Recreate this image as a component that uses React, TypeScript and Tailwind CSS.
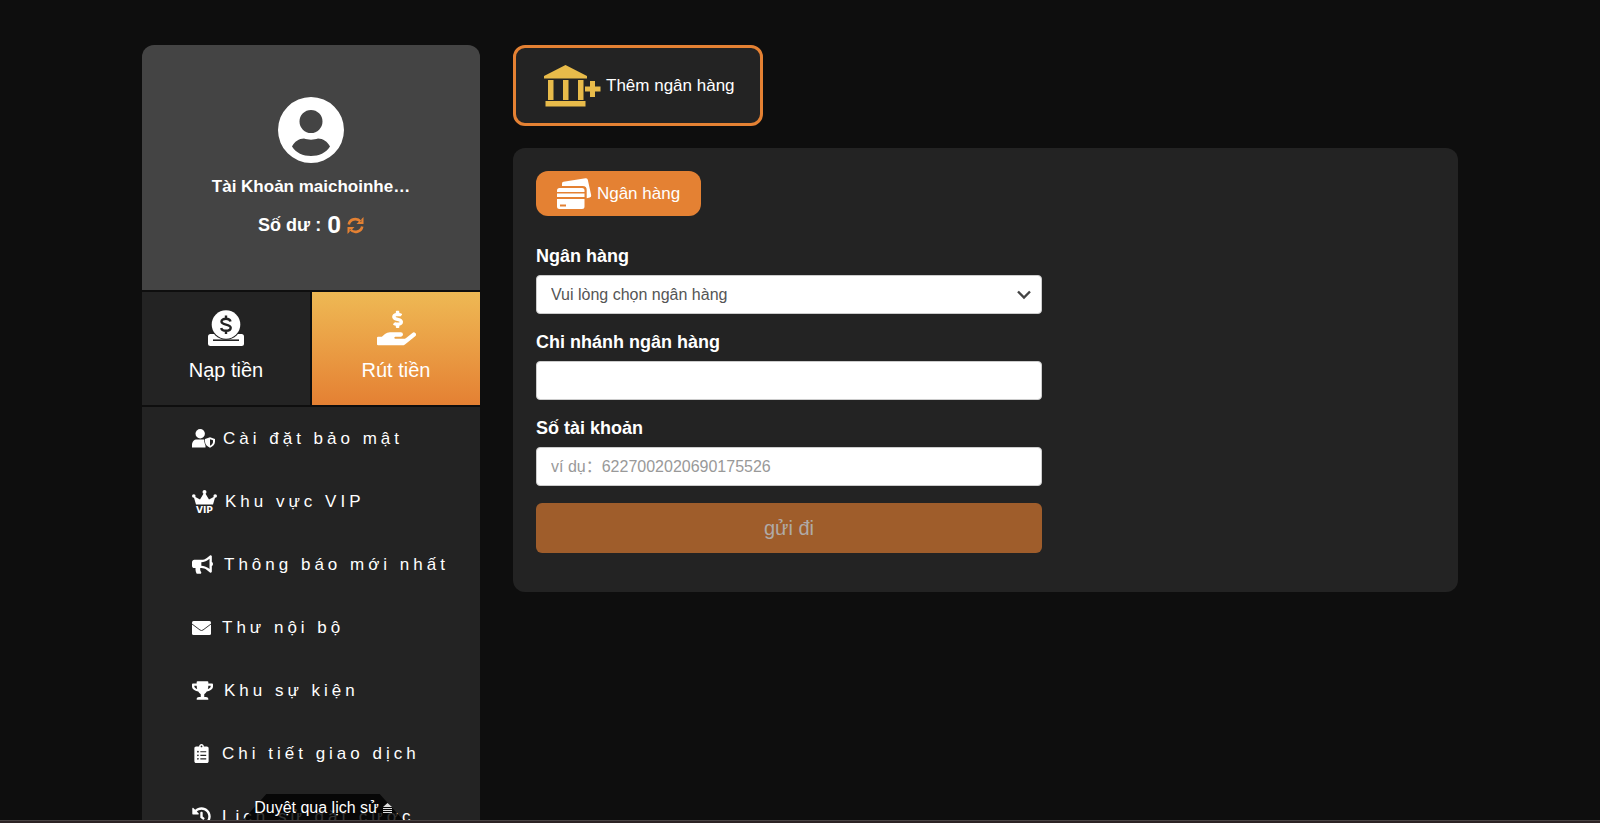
import React from 'react';
import { FaBullhorn, FaClipboardList, FaHandHoldingUsd, FaHistory, FaTrophy } from 'react-icons/fa';

interface MenuItem {
  label: string;
  icon: React.ReactNode;
  gap: string;
}

const AvatarIcon = () => (
  <svg width="66" height="66" viewBox="0 0 66 66" aria-hidden="true">
    <path
      fill="#fff"
      fillRule="evenodd"
      d="M33 0a33 33 0 1 1 0 66a33 33 0 1 1 0-66zM33 13a11.500 11.500 0 1 0 0 23a11.500 11.500 0 1 0 0-23zM14 49.500C16.500 44.500 21 41.500 26 41.500C30 43 36 43 40 41.500C45 41.500 49.500 44.500 52 49.500C48 56 41 59 33 59C25 59 18 56 14 49.500z"
    />
  </svg>
);

const RefreshIcon = () => (
  <svg width="17" height="17" viewBox="0 0 17 17" aria-hidden="true">
    <path
      d="M1.800 7.500A6.600 6.200 0 0 1 13.500 4.500M15.200 9.500A6.600 6.200 0 0 1 3.500 12.500"
      fill="none"
      stroke="#e48133"
      strokeWidth="2.600"
    />
    <path d="M16.500 0v7H9.500l2-2h2.800V2.200zM.5 17v-7h7l-2 2H2.700v2.800z" fill="#e48133" />
  </svg>
);

const DepositIcon = () => (
  <svg width="36" height="36" viewBox="0 0 36 36" aria-hidden="true">
    <rect y="24" width="36" height="12" rx="2.500" fill="#fff" />
    <path d="M5 30.200h26" stroke="#232323" strokeWidth="1.600" />
    <circle cx="18" cy="14.500" r="15.300" fill="#232323" />
    <circle cx="18" cy="14.500" r="14.300" fill="#fff" />
    <path
      d="M18 5.500v3.500M18 20.500v3.500M22.500 11.500c-.5-2-2.200-2.700-4.500-2.700c-2.600 0-4.500 1-4.500 2.800c0 2 2 2.500 4.500 3s4.700 1.200 4.700 3.200c0 2-2 3-4.700 3c-2.500 0-4.400-.8-4.800-2.800"
      fill="none"
      stroke="#232323"
      strokeWidth="2.400"
    />
  </svg>
);

const UserShieldIcon = () => (
  <svg width="23" height="19" viewBox="0 0 23 19" aria-hidden="true">
    <circle cx="8.200" cy="4.800" r="4.700" fill="#fff" />
    <path d="M0 18.500v-2.500c0-3.500 2-5.500 5-5.500h6.500c.8 0 1.500.2 2 .4v7.600z" fill="#fff" />
    <path d="M18 6.500l5.500 2.200v3.500c0 3.300-2.200 6-5.500 7.300c-3.300-1.300-5.700-4-5.700-7.300V8.700z" fill="#232323" />
    <path d="M18 8.200l5 1.900v2.400c0 2.800-2 5-5 6.200c-3-1.200-5-3.400-5-6.200v-2.400z" fill="#fff" />
    <path d="M18 10.200l3 1.100v1.700c0 1.500-1.200 2.800-3 3.700z" fill="#232323" />
  </svg>
);

const VipIcon = () => (
  <svg width="25" height="24" viewBox="0 0 25 24" fill="#fff" aria-hidden="true" className="tracking-normal">
    <path d="M4 14.500L1.500 6l6.500 3.500L12.500 2l4.500 7.500L23.500 6L21 14.500z" />
    <circle cx="1.800" cy="6" r="1.800" />
    <circle cx="12.500" cy="2" r="2" />
    <circle cx="23.200" cy="6" r="1.800" />
    <text x="12.500" y="22.500" textAnchor="middle" fontSize="9" fontWeight="700" fontFamily="DejaVu Sans, sans-serif">
      VIP
    </text>
  </svg>
);

const EnvelopeIcon = () => (
  <svg width="19" height="14" viewBox="0 0 19 14" aria-hidden="true">
    <rect width="19" height="14" rx="1.500" fill="#fff" />
    <path d="M0 3l8 6q1.500 1 3 0l8-6" fill="none" stroke="#232323" strokeWidth=".9" />
  </svg>
);

const BankPlusIcon = () => (
  <svg width="57" height="42" viewBox="0 0 57 42" fill="#e8bb4a" aria-hidden="true">
    <path d="M0 11L21.500 0L43 11v2.500H0zM4 15h5.500v20H4zM19 15h5.500v20H19zM34 15h5.500v20H34zM1.500 36h40v5.500h-40z" />
    <path d="M46 16h5v5.500h5.500v5H51V32h-5v-5.500h-5v-5h5z" />
  </svg>
);

const CardsIcon = () => (
  <svg width="35" height="32" viewBox="0 0 35 32" aria-hidden="true">
    <path d="M5 5.500Q5 4 6.500 3.800L28.500.3q2-.3 2.300 1.500l3.400 15.500q.3 1.800-1.500 2.200l-3 .7V12q0-4-4-4H5z" fill="#fff" />
    <path d="M0 12.500Q0 10 2.500 10h22.500q2.500 0 2.500 2.500V14H0z" fill="#fff" />
    <path d="M0 15.500h27.500V19H0zM0 21h27.500v7.500q0 2.500-2.500 2.500H2.500Q0 31 0 28.500z" fill="#fff" />
    <path d="M3 27.500h6" stroke="#e48133" strokeWidth="2" />
  </svg>
);

const menu: MenuItem[] = [
  { label: 'Cài đặt bảo mật', icon: <UserShieldIcon />, gap: 'gap-2' },
  { label: 'Khu vực VIP', icon: <VipIcon />, gap: 'gap-2' },
  { label: 'Thông báo mới nhất', icon: <FaBullhorn size={21} />, gap: 'gap-[11px]' },
  { label: 'Thư nội bộ', icon: <EnvelopeIcon />, gap: 'gap-[11px]' },
  { label: 'Khu sự kiện', icon: <FaTrophy size={21} />, gap: 'gap-[11px]' },
  { label: 'Chi tiết giao dịch', icon: <FaClipboardList size={19} />, gap: 'gap-[11px]' },
  { label: 'Lịch sử đặt cược', icon: <FaHistory size={19} />, gap: 'gap-[11px]' },
];

const Sidebar = () => (
  <aside className="flex w-[338px] shrink-0 flex-col gap-[2px]">
    <section className="flex h-[245px] flex-col items-center rounded-t-xl bg-[#444444] pt-[52px] font-bold">
      <AvatarIcon />
      <p className="mt-3 text-[17px] leading-6">Tài Khoản maichoinhe…</p>
      <div className="mt-[10px] flex h-8 items-center gap-[6px] text-[18px]">
        <span>Số dư :</span>
        <span className="font-[family-name:Roboto,sans-serif] text-[24px] font-bold">0</span>
        <button type="button" aria-label="Làm mới số dư">
          <RefreshIcon />
        </button>
      </div>
    </section>
    <div className="grid h-[113px] grid-cols-2 gap-[2px] text-[20px] leading-6">
      <button type="button" className="flex flex-col items-center gap-3 bg-[#232323] pt-[18px]">
        <DepositIcon />
        Nạp tiền
      </button>
      <button type="button" className="flex flex-col items-center gap-3 bg-linear-to-b from-[#eeb954] to-[#e48033] pt-[18px]">
        <FaHandHoldingUsd className="h-[36px] w-[39px]" />
        Rút tiền
      </button>
    </div>
    <nav className="flex-1 bg-[#232323]">
      {menu.map((item) => (
        <a
          key={item.label}
          href="#"
          className={`flex h-[63px] items-center pl-[50px] text-[17px] tracking-[4px] whitespace-nowrap ${item.gap}`}
        >
          {item.icon}
          <span>{item.label}</span>
        </a>
      ))}
    </nav>
  </aside>
);

const field =
  'block h-[39px] w-full rounded border border-[#cccccc] bg-white px-[14px] text-[16px] text-[#555555] placeholder:text-[#999999]';

const BankForm = () => (
  <form className="mt-7 flex max-w-[506px] flex-col">
    <label htmlFor="bank" className="mb-[7px] text-[18px] leading-6 font-bold">
      Ngân hàng
    </label>
    <div className="relative">
      <select id="bank" className={`${field} appearance-none`}>
        <option>Vui lòng chọn ngân hàng</option>
      </select>
      <svg
        width="14"
        height="10"
        viewBox="0 0 14 10"
        fill="none"
        stroke="#444"
        strokeWidth="2.400"
        aria-hidden="true"
        className="pointer-events-none absolute top-[15px] right-[11px]"
      >
        <path d="M1 1.500l6 6l6-6" />
      </svg>
    </div>
    <label htmlFor="branch" className="mt-4 mb-[7px] text-[18px] leading-6 font-bold">
      Chi nhánh ngân hàng
    </label>
    <input id="branch" type="text" className={field} />
    <label htmlFor="account" className="mt-4 mb-[7px] text-[18px] leading-6 font-bold">
      Số tài khoản
    </label>
    <input id="account" type="text" placeholder="ví dụ：6227002020690175526" className={field} />
    <button type="submit" disabled className="mt-[17px] h-[50px] rounded-md bg-[#9f5d2b] text-[20px] text-[#b0aaa6]">
      gửi đi
    </button>
  </form>
);

const App: React.FC = () => {
  return (
    <div className="relative h-screen overflow-hidden bg-[#0e0e0e] font-['Liberation_Sans','Noto_Sans_CJK_SC',sans-serif] text-white">
      <div className="mx-auto flex max-w-[1316px] gap-[33px] pt-[45px]">
        <Sidebar />
        <main className="min-w-0 flex-1">
          <button
            type="button"
            className="flex h-[81px] w-[250px] items-center gap-[5px] rounded-xl border-3 border-[#e48133] bg-[#232323] pl-7 text-[17px]"
          >
            <BankPlusIcon />
            Thêm ngân hàng
          </button>
          <section className="mt-[22px] rounded-xl bg-[#232323] px-[23px] pt-[23px] pb-[39px]">
            <button type="button" className="flex h-[45px] w-[165px] items-center justify-center gap-[5px] rounded-xl bg-[#e48133] text-[17px]">
              <CardsIcon />
              Ngân hàng
            </button>
            <BankForm />
          </section>
        </main>
      </div>
      <button
        type="button"
        className="absolute bottom-[2px] left-[242px] isolate flex h-[27px] w-[162px] items-center justify-center gap-1 text-[16px] whitespace-nowrap before:absolute before:inset-0 before:-z-10 before:bg-black/80 before:[clip-path:polygon(15%_0,85%_0,100%_100%,0_100%)]"
      >
        Duyệt qua lịch sử
        <svg width="9" height="10" viewBox="0 0 9 10" fill="#ddd" aria-hidden="true" className="shrink-0">
          <path d="M4.500 0L9 4H0zM0 5h9v1H0zM0 7h9v1H0zM0 9h9v1H0z" />
        </svg>
      </button>
      <div className="absolute inset-x-0 bottom-0 h-[3px] border-t border-[#4a4444] bg-[#2c2325]" />
    </div>
  );
};

export default App;
